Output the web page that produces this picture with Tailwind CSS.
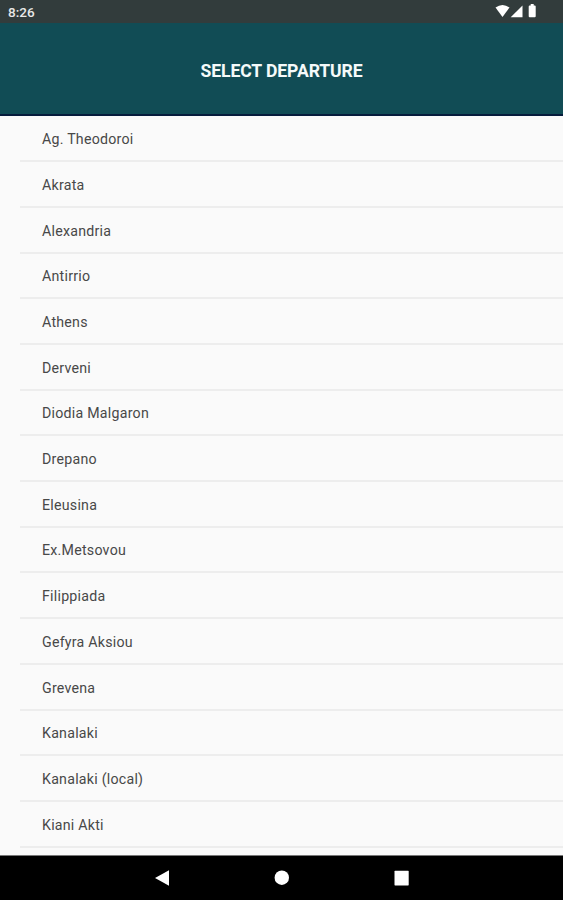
<!DOCTYPE html>
<html lang="en"><head><meta charset="utf-8"><title>Select departure</title>
<script src="https://cdn.jsdelivr.net/npm/@tailwindcss/browser@4"></script></head>
<body class="bg-[#fafafa]">
<div class="w-[563px] h-[900px] flex flex-col overflow-hidden font-['Roboto',sans-serif]">
<div class="h-[23px] shrink-0 bg-[#323c3c] flex items-center justify-between pl-2 pr-[24px] text-[#e8e8e8]">
<span class="text-[13.5px] font-medium leading-6 pt-px">8:26</span>
<svg class="w-[44px] h-[23px]" viewBox="0 0 44 23" fill="#fff"><path d="M.5 7.500Q7.500 2.500 14.500 7.500L7.500 17Z"/><path d="M27.500 5.500V17.300H15.700Z"/><path d="M33.700 6.500q0-1 1-1h1V4h3v1.500h1q1 0 1 1V16.300q0 1-1 1h-5q-1 0-1-1Z"/></svg>
</div>
<header class="h-[93px] shrink-0 bg-[#114c55] border-b-2 border-[#061c3c] flex items-center justify-center pt-[5px]"><h1 class="text-[#f5fafa] font-bold text-[17.6px] tracking-[-0.1px]">SELECT DEPARTURE</h1></header>
<ul id="list" class="flex-1 overflow-hidden pt-[0.6px] pl-5 text-[14.2px] tracking-[0.24px] text-[#484848]"></ul>
<nav class="h-[45px] shrink-0 bg-black border-t border-[#777] flex items-center justify-center"><svg class="w-[260px] h-11" viewBox="0 0 260 44" fill="#fff"><path d="M3 22 17 14.200V29.800Z"/><circle cx="129.800" cy="21.700" r="7.200"/><rect x="242.500" y="14.800" width="14.200" height="14.600" rx=".6"/></svg></nav>
</div>
<script>
document.getElementById('list').innerHTML=['Ag. Theodoroi','Akrata','Alexandria','Antirrio','Athens','Derveni','Diodia Malgaron','Drepano','Eleusina','Ex.Metsovou','Filippiada','Gefyra Aksiou','Grevena','Kanalaki','Kanalaki (local)','Kiani Akti'].map(n=>`<li class="h-[45.7px] pl-[22px] pt-[3px] border-b-2 border-[#ededed] flex items-center">${n}</li>`).join('');
</script>
</body></html>
